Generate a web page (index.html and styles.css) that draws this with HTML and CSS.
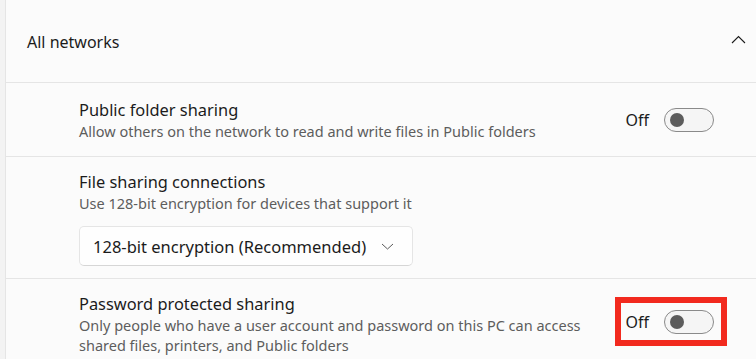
FILE: index.html
```html
<!DOCTYPE html>
<html>
<head>
<meta charset="utf-8">
<link rel="stylesheet" href="styles.css">
</head>
<body>
<div class="page">
  <div class="rail"></div>
  <div class="panel">
    <div class="header">
      <span class="header-title">All networks</span>
      <svg class="chev-up" width="15" height="9" viewBox="0 0 15 9"><path d="M1 8 L7.5 1.5 L14 8" fill="none" stroke="#1b1b1b" stroke-width="1.1"/></svg>
    </div>
    <div class="row row-center">
      <div class="text">
        <div class="title">Public folder sharing</div>
        <div class="sub">Allow others on the network to read and write files in Public folders</div>
      </div>
      <div class="control">
        <span class="state">Off</span>
        <span class="toggle"><span class="knob"></span></span>
      </div>
    </div>
    <div class="row row-stack">
      <div class="text">
        <div class="title">File sharing connections</div>
        <div class="sub">Use 128-bit encryption for devices that support it</div>
      </div>
      <div class="select">
        <span>128-bit encryption (Recommended)</span>
        <svg class="chev-down" width="13" height="7" viewBox="0 0 13 7"><path d="M1 1 L6.5 6 L12 1" fill="none" stroke="#5a5a5a" stroke-width="1"/></svg>
      </div>
    </div>
    <div class="row row-top">
      <div class="text">
        <div class="title">Password protected sharing</div>
        <div class="sub">Only people who have a user account and password on this PC can access<br>shared files, printers, and Public folders</div>
      </div>
      <div class="control highlighted">
        <span class="state">Off</span>
        <span class="toggle"><span class="knob"></span></span>
        <span class="mark"></span>
      </div>
    </div>
  </div>
</div>
</body>
</html>
```

FILE: styles.css
```css
html, body {
  margin: 0;
  padding: 0;
  background: #fbfbfb;
  font-family: "Noto Sans", "Open Sans", sans-serif;
  color: #1b1b1b;
  overflow: hidden;
}
.page {
  display: flex;
  height: 359px;
}
.rail {
  width: 5px;
  background: #f3f3f3;
  border-right: 1px solid #e5e5e5;
  flex: none;
}
.panel {
  flex: 1;
  background: #fbfbfb;
}
.header {
  border-bottom: 1px solid #e5e5e5;
  display: flex;
  align-items: center;
  justify-content: space-between;
  padding: 0 10px 0 21px;
  box-sizing: border-box;
  height: 83px;
}
.header-title {
  font-size: 16px;
  position: relative;
  top: 1px;
}
.chev-up {
  margin-top: -4px;
}
.row {
  border-bottom: 1px solid #e5e5e5;
  padding-left: 73px;
  box-sizing: border-box;
}
.row-center {
  height: 74px;
  display: flex;
  align-items: center;
  justify-content: space-between;
  padding-right: 42px;
  padding-top: 1px;
}
.row-stack {
  height: 122px;
  padding-top: 15px;
}
.row-top {
  border-bottom: none;
  display: flex;
  justify-content: space-between;
  padding-top: 15px;
  padding-right: 42px;
}
.title {
  font-size: 16.4px;
  line-height: 20px;
}
.sub {
  font-size: 14.5px;
  line-height: 20px;
  color: #5d5d5d;
  margin-top: 1px;
}
.control {
  display: flex;
  align-items: center;
  position: relative;
}
.row-top .control {
  margin-top: 16px;
  align-self: flex-start;
}
.state {
  font-size: 16px;
  margin-right: 15px;
}
.toggle {
  width: 48px;
  height: 22px;
  border: 1px solid #8a8a8a;
  border-radius: 12px;
  background: #f5f5f5;
  display: flex;
  align-items: center;
  box-sizing: content-box;
}
.knob {
  width: 14px;
  height: 14px;
  border-radius: 50%;
  background: #5c5c5c;
  margin-left: 5px;
}
.mark {
  position: absolute;
  left: -10px;
  right: -13px;
  top: -13px;
  bottom: -12px;
  border: 6px solid #f22a1e;
}
.select {
  margin-top: 13px;
  width: 334px;
  height: 40px;
  box-sizing: border-box;
  background: #fefefe;
  border: 1px solid #e5e5e5;
  border-bottom-color: #d6d6d6;
  border-radius: 5px;
  display: flex;
  align-items: center;
  justify-content: space-between;
  padding: 0 18px 0 13px;
  font-size: 16.5px;
}
```
